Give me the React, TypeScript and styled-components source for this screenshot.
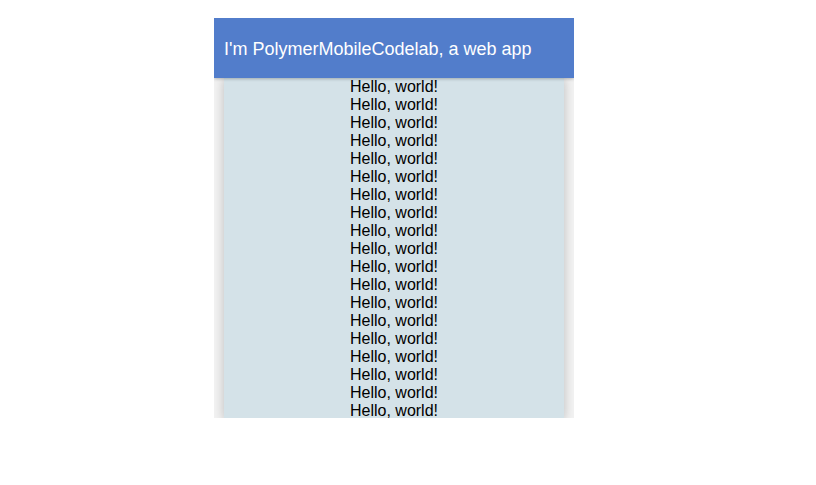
import React from "react";
import styled, { createGlobalStyle } from "styled-components";

const GlobalStyle = createGlobalStyle`
  body {
    margin: 0;
    background: #fff;
    font-family: "Liberation Sans", Arial, sans-serif;
  }
`;

const Page = styled.div`
  padding: 18px 0 0 214px;
`;

const Frame = styled.div`
  width: 360px;
  height: 400px;
  display: flex;
  flex-direction: column;
  overflow: hidden;
  background: #f2f2f2;
`;

const Toolbar = styled.header`
  position: relative;
  z-index: 1;
  height: 60px;
  flex: none;
  display: flex;
  align-items: center;
  padding: 0 10px;
  padding-top: 2px;
  box-sizing: border-box;
  background: #527dcb;
  color: #fff;
  font-size: 18px;
  box-shadow: 0 1px 3px rgba(0, 0, 0, 0.25);
`;

const Content = styled.main`
  flex: 1;
  margin: 0 10px;
  background: #d4e2e8;
  box-shadow: 0 0 10px rgba(0, 0, 0, 0.22);
  text-align: center;
  font-size: 16px;
  line-height: 18px;
  color: #000;
`;

const Line = styled.div``;

const lines = Array.from({ length: 19 }, (_, i) => i);

export default function App() {
  return (
    <>
      <GlobalStyle />
      <Page>
        <Frame>
          <Toolbar>I'm PolymerMobileCodelab, a web app</Toolbar>
          <Content>
            {lines.map((i) => (
              <Line key={i}>Hello, world!</Line>
            ))}
          </Content>
        </Frame>
      </Page>
    </>
  );
}
